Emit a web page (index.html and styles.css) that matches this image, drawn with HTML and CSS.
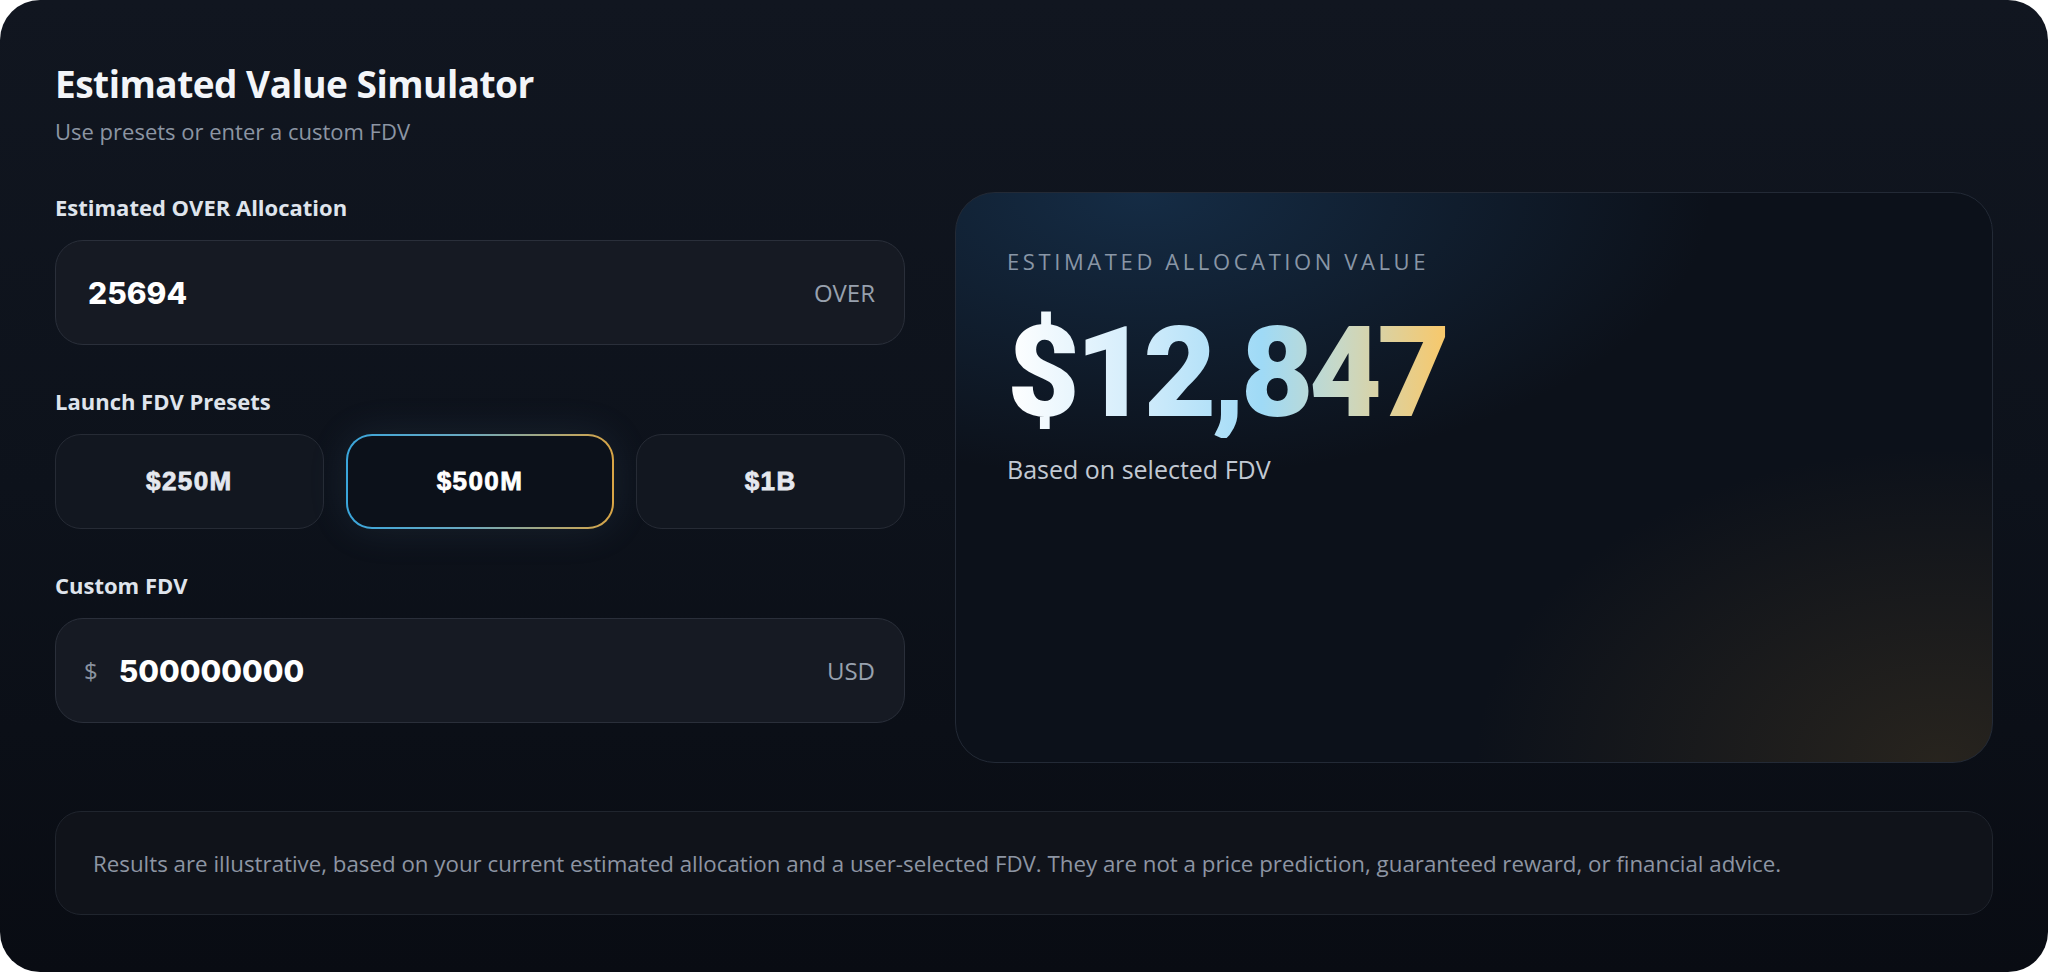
FILE: index.html
```html
<!DOCTYPE html>
<html lang="en">
<head>
    <meta charset="UTF-8">
    <meta name="viewport" content="width=device-width, initial-scale=1.0">
    <title>Estimated Value Simulator</title>
    <link rel="stylesheet" href="styles.css">
</head>
<body>

    <div class="simulator">

        <!-- Header -->
        <div class="sim-header">
            <h1>Estimated Value Simulator</h1>
            <p>Use presets or enter a custom FDV</p>
        </div>

        <div class="sim-body">

            <!-- Inputs -->
            <div class="sim-form">
                <div class="group">
                    <label for="allocation">Estimated OVER Allocation</label>
                    <div class="field">
                        <input type="text" id="allocation" value="25694">
                        <span class="suffix">OVER</span>
                    </div>
                </div>

                <div class="group">
                    <label>Launch FDV Presets</label>
                    <div class="presets">
                        <button class="preset" onclick="setFdv(250000000, this)">$250M</button>
                        <button class="preset active" onclick="setFdv(500000000, this)">$500M</button>
                        <button class="preset" onclick="setFdv(1000000000, this)">$1B</button>
                    </div>
                </div>

                <div class="group">
                    <label for="fdv">Custom FDV</label>
                    <div class="field">
                        <span class="prefix">$</span>
                        <input type="text" id="fdv" value="500000000">
                        <span class="suffix">USD</span>
                    </div>
                </div>
            </div>

            <!-- Result -->
            <div class="result-card">
                <div class="result-label">Estimated Allocation Value</div>
                <div class="result-value" id="resultValue">$12,847</div>
                <div class="result-note">Based on selected FDV</div>
            </div>
        </div>

        <!-- Disclaimer -->
        <div class="disclaimer">
            Results are illustrative, based on your current estimated allocation and a user-selected FDV. They are not a price prediction, guaranteed reward, or financial advice.
        </div>
    </div>

    <script>
        const TOTAL_SUPPLY = 1000000000;

        // Recalculate value
        function updateValue() {
            const allocation = parseFloat(document.getElementById('allocation').value) || 0;
            const fdv = parseFloat(document.getElementById('fdv').value) || 0;
            const value = Math.round(allocation * fdv / TOTAL_SUPPLY);
            document.getElementById('resultValue').textContent = '$' + value.toLocaleString('en-US');
        }

        // Preset buttons
        function setFdv(amount, btn) {
            document.getElementById('fdv').value = amount;
            document.querySelectorAll('.preset').forEach(b => b.classList.remove('active'));
            btn.classList.add('active');
            updateValue();
        }

        document.getElementById('allocation').addEventListener('input', updateValue);
        document.getElementById('fdv').addEventListener('input', function () {
            document.querySelectorAll('.preset').forEach(b => b.classList.remove('active'));
            updateValue();
        });
    </script>

</body>
</html>
```

FILE: styles.css
```css
* {
    margin: 0;
    padding: 0;
    box-sizing: border-box;
}

body {
    font-family: 'Open Sans', 'Noto Sans', sans-serif;
    background-color: #ffffff;
    color: #e6eaf0;
}

/* Main panel */
.simulator {
    width: 2048px;
    height: 972px;
    border-radius: 40px;
    padding: 57px 55px 57px 55px;
    background: linear-gradient(180deg, #111620 0%, #0d121b 50%, #090c13 100%);
    overflow: hidden;
}

/* Header */
.sim-header h1 {
    margin-top: 3px;
    font-size: 37px;
    font-weight: 700;
    line-height: 48px;
    color: #f3f5f9;
    letter-spacing: -0.5px;
}

.sim-header p {
    margin-top: 9px;
    font-size: 22px;
    line-height: 29px;
    color: #8c95a3;
}

/* Body grid */
.sim-body {
    display: grid;
    grid-template-columns: 850px 1038px;
    gap: 50px;
    margin-top: 46px;
    align-items: start;
}

.sim-form {
    display: flex;
    flex-direction: column;
    gap: 41px;
}

.group label {
    display: block;
    font-size: 22px;
    font-weight: 700;
    line-height: 30px;
    color: #dfe4ec;
    margin-bottom: 18px;
}

/* Input fields */
.field {
    display: flex;
    align-items: center;
    height: 105px;
    padding: 0 29px 0 32px;
    background-color: #161a23;
    border: 1px solid #2a2f3a;
    border-radius: 28px;
}

.field input {
    flex: 1;
    min-width: 0;
    background: transparent;
    border: none;
    outline: none;
    font-family: 'Inter', sans-serif;
    font-size: 30px;
    font-weight: 800;
    color: #ffffff;
}

.field .suffix {
    font-size: 24px;
    color: #98a1ae;
}

.field .prefix {
    font-size: 24px;
    color: #8a93a0;
    margin-left: -4px;
    margin-right: 21px;
}

/* Presets */
.presets {
    display: grid;
    grid-template-columns: repeat(3, 1fr);
    gap: 22px;
}

.preset {
    height: 95px;
    background-color: #121720;
    border: 1px solid #262b35;
    border-radius: 26px;
    font-family: 'Liberation Sans', Arial, sans-serif;
    font-size: 26px;
    font-weight: 700;
    letter-spacing: 1.4px;
    -webkit-text-stroke: 0.8px currentColor;
    color: #e4e8ef;
    cursor: pointer;
}

.preset.active {
    border: 2px solid transparent;
    background:
        linear-gradient(#0c111a, #0c111a) padding-box,
        linear-gradient(90deg, #3aa6dc 0%, #6aa9c0 45%, #d9a545 100%) border-box;
    color: #ffffff;
    box-shadow: 0 0 40px rgba(110, 150, 190, 0.12);
}

/* Result card */
.result-card {
    height: 571px;
    padding: 53px 51px;
    border: 1px solid #232a36;
    border-radius: 40px;
    background:
        radial-gradient(ellipse 55% 50% at 18% 0%, rgba(28, 66, 104, 0.55), transparent 100%),
        radial-gradient(ellipse 45% 55% at 95% 100%, rgba(110, 84, 40, 0.28), transparent 100%),
        #0c111a;
}

.result-label {
    font-size: 22px;
    letter-spacing: 3.6px;
    text-transform: uppercase;
    color: #8996a6;
    line-height: 30px;
}

.result-value {
    margin-top: 32px;
    font-family: 'Roboto', sans-serif;
    font-size: 126px;
    font-weight: 900;
    line-height: 130px;
    letter-spacing: -4.8px;
    background: linear-gradient(90deg, #ffffff 0%, #d2ecfb 30%, #9fdaf6 58%, #c8d8c6 76%, #f8c86a 100%);
    -webkit-background-clip: text;
    background-clip: text;
    color: transparent;
    display: inline-block;
}

.result-note {
    margin-top: 14px;
    font-size: 25px;
    color: #c2c9d3;
}

/* Disclaimer */
.disclaimer {
    margin-top: 48px;
    height: 104px;
    display: flex;
    align-items: center;
    padding: 0 37px;
    background-color: #10131a;
    border: 1px solid #20252e;
    border-radius: 26px;
    font-size: 22.3px;
    color: #8d95a3;
}
```
